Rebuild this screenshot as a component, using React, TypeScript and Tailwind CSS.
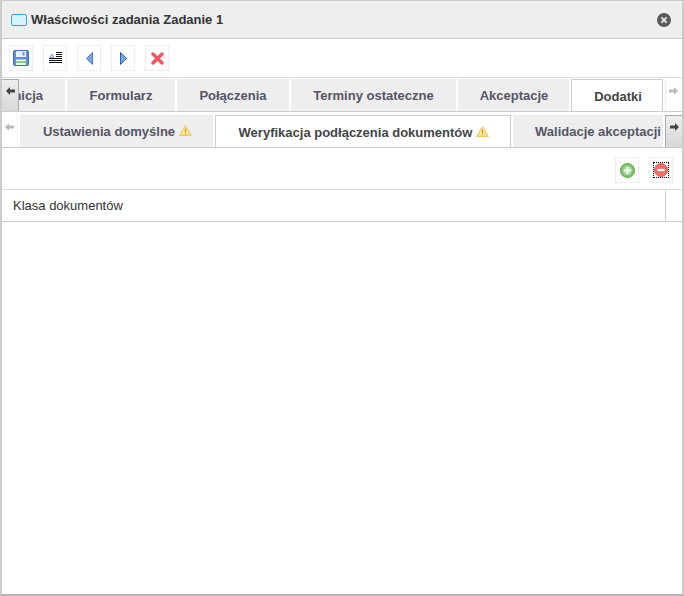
import type { ReactNode } from "react";

function ToolButton({ children, className = "" }: { children: ReactNode; className?: string }) {
  return (
    <div className={`flex h-[26px] w-[24px] items-center justify-center border border-[#eeeeee] bg-white ${className}`}>
      {children}
    </div>
  );
}

function Warn() {
  return (
    <svg width="13" height="11" viewBox="0 0 13 11" className="ml-[4px] mb-[3px] inline-block shrink-0">
      <path d="M6.5 .7 12.4 10.4H.6Z" fill="#fde58a" stroke="#e8c060" strokeWidth="1" strokeLinejoin="round" />
      <path d="M6.5 3.5v3.6" stroke="#d09a3a" strokeWidth="1.3" />
      <path d="M6.5 8v1.2" stroke="#d09a3a" strokeWidth="1.2" />
    </svg>
  );
}

function Arrow({ dir, dark }: { dir: "left" | "right"; dark?: boolean }) {
  const color = dark ? "#444444" : "#bbbbbb";
  return (
    <svg width="9" height="8" viewBox="0 0 9 8">
      {dir === "left" ? (
        <path d="M0 4 4 0v2.5h5v3H4V8Z" fill={color} />
      ) : (
        <path d="M9 4 5 0v2.5H0v3h5V8Z" fill={color} />
      )}
    </svg>
  );
}

function Tab({ label, className = "", warn, active }: { label: string; className?: string; warn?: boolean; active?: boolean }) {
  return (
    <div
      className={`flex shrink-0 items-center justify-center whitespace-nowrap pt-[2px] text-[13px] font-bold ${
        active ? "border border-b-0 border-[#cccccc] bg-white text-[#444444]" : "bg-[#eeeeee] text-[#555566]"
      } ${className}`}
    >
      {label}
      {warn && <Warn />}
    </div>
  );
}

export default function App() {
  return (
    <div className="h-[596px] w-[684px] overflow-hidden bg-white font-['Liberation_Sans',Arial,sans-serif]">
      <div className="flex h-[596px] flex-col border-x-2 border-t border-b-2 border-x-[#cccccc] border-t-[#cccccc] border-b-[#b5b5b5]">
        <div className="flex h-[38px] shrink-0 items-center border-b border-[#cccccc] bg-[#eeeeee] pl-[9px] pr-[11px]">
          <div className="mr-[4px] h-[12px] w-[16px] rounded-[2px] border border-[#3aa7d8] bg-[#d4f3fd]" />
          <span className="text-[13px] font-bold text-[#333333]">Właściwości zadania Zadanie 1</span>
          <svg width="14" height="14" viewBox="0 0 14 14" className="ml-auto">
            <circle cx="7" cy="7" r="7" fill="#5a5a5a" />
            <path d="M4.4 4.4 9.6 9.6M9.6 4.4 4.4 9.6" stroke="#e4e4e4" strokeWidth="2" />
          </svg>
        </div>

        <div className="flex h-[39px] shrink-0 items-center gap-[10px] border-b border-[#dddddd] pl-[7px]">
          <ToolButton>
            <svg width="16" height="16" viewBox="0 0 16 16">
              <rect x=".5" y=".5" width="15" height="15" rx="1.5" fill="#5f8fd8" stroke="#3f6db5" />
              <rect x="3" y="1" width="10" height="6" fill="#e8f0fb" />
              <rect x="9.5" y="2" width="2" height="3.5" fill="#6d93cf" />
              <rect x="3" y="9.5" width="10" height="5.5" fill="#eef2f2" />
              <rect x="3" y="11" width="10" height="2" fill="#8fd07a" />
            </svg>
          </ToolButton>
          <ToolButton>
            <svg width="13" height="12" viewBox="0 0 13 12">
              <text x="0" y="6.5" fontSize="8" fontFamily="'Liberation Sans',sans-serif" fill="#5b86c4">A</text>
              <path d="M7 .5h6M7 2.5h6M7 4.5h6M0 6.5h13M0 8.5h13M0 10.5h13" stroke="#111111" strokeWidth="1" />
            </svg>
          </ToolButton>
          <ToolButton>
            <svg width="7" height="13" viewBox="0 0 7 13">
              <path d="M6.5 .5v12L.5 6.5Z" fill="#7aa8e6" stroke="#4a7cc8" />
            </svg>
          </ToolButton>
          <ToolButton>
            <svg width="7" height="13" viewBox="0 0 7 13">
              <path d="M.5 .5v12L6.5 6.5Z" fill="#7aa8e6" stroke="#2f5fb5" />
            </svg>
          </ToolButton>
          <ToolButton>
            <svg width="13" height="13" viewBox="0 0 13 13">
              <path d="M2 2 11 11M11 2 2 11" stroke="#f5555c" strokeWidth="3.4" strokeLinecap="round" />
            </svg>
          </ToolButton>
        </div>

        <div className="relative flex h-[34px] shrink-0 items-end gap-[2px] overflow-hidden border-b border-[#cccccc]">
          <div className="absolute left-0 top-[1px] z-10 flex h-[32px] w-[17px] justify-center border-r border-t border-[#aaaaaa] bg-gradient-to-b from-[#eeeeee] to-[#d8d8d8] pt-[7px]">
            <Arrow dir="left" dark />
          </div>
          <div className="flex h-[32px] w-[63px] shrink-0 items-center justify-end bg-[#eeeeee] pr-[22px] pt-[2px] text-[13px] font-bold text-[#555566]">
            nicja
          </div>
          <Tab label="Formularz" className="h-[32px] w-[108px]" />
          <Tab label="Połączenia" className="h-[32px] w-[112px]" />
          <Tab label="Terminy ostateczne" className="h-[32px] w-[165px]" />
          <Tab label="Akceptacje" className="h-[32px] w-[111px] pl-[1px]" />
          <Tab label="Dodatki" active className="relative top-[1px] h-[33px] w-[92px] pl-[2px]" />
          <div className="flex h-[32px] w-[16px] shrink-0 justify-center border-l border-[#eeeeee] bg-white pt-[8px]">
            <Arrow dir="right" />
          </div>
        </div>

        <div className="relative mt-[2px] flex h-[34px] shrink-0 items-end gap-[2px] overflow-hidden border-b border-[#cccccc]">
          <div className="flex h-[32px] w-[16px] shrink-0 justify-center border-r border-[#eeeeee] pt-[8px]">
            <Arrow dir="left" />
          </div>
          <Tab label="Ustawienia domyślne" warn className="h-[32px] w-[193px] pl-[2px]" />
          <Tab label="Weryfikacja podłączenia dokumentów" warn active className="relative top-[1px] h-[33px] w-[296px] pl-[2px]" />
          <Tab label="Walidacje akceptacji" className="h-[32px] w-[150px] justify-end! pr-[2px]" />
          <div className="flex h-[32px] w-[18px] shrink-0 justify-center border-l border-t border-[#aaaaaa] bg-gradient-to-b from-[#eeeeee] to-[#d8d8d8] pt-[7px]">
            <Arrow dir="right" dark />
          </div>
        </div>

        <div className="flex h-[42px] shrink-0 items-start justify-end gap-[10px] border-b border-[#dddddd] pr-[9px] pt-[9px]">
          <ToolButton>
            <svg width="15" height="15" viewBox="0 0 15 15">
              <circle cx="7.5" cy="7.5" r="7" fill="#7fc46c" stroke="#5aa648" />
              <circle cx="7.5" cy="7.5" r="4.8" fill="#a3da92" />
              <path d="M7.5 4v7M4 7.5h7" stroke="#ffffff" strokeWidth="2" />
            </svg>
          </ToolButton>
          <ToolButton>
            <div className="flex h-[16px] w-[16px] items-center justify-center border border-dotted border-black">
              <svg width="14" height="14" viewBox="0 0 14 14">
                <circle cx="7" cy="7" r="6.5" fill="#ee6f66" stroke="#dd5f55" />
                <path d="M3.4 7h7.2" stroke="#ffffff" strokeWidth="2.2" />
              </svg>
            </div>
          </ToolButton>
        </div>

        <div className="flex h-[32px] shrink-0 items-center border-b border-[#cccccc] text-[13px] text-[#333333]">
          <span className="pl-[11px]">Klasa dokumentów</span>
          <div className="ml-auto mr-[16px] h-full border-l border-[#cccccc]" />
        </div>

        <div className="flex-1 bg-white" />
      </div>
    </div>
  );
}
